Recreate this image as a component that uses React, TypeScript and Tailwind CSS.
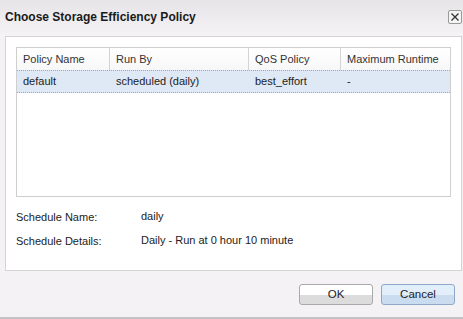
import React from "react";

const font = { fontFamily: '"Liberation Sans", Arial, sans-serif' };

export default function App() {
  const cols = [
    { name: "Policy Name", w: "w-[93px]", v: "default" },
    { name: "Run By", w: "w-[139px]", v: "scheduled (daily)" },
    { name: "QoS Policy", w: "w-[92px]", v: "best_effort" },
    { name: "Maximum Runtime", w: "flex-1", v: "-" },
  ];
  return (
    <div
      style={font}
      className="w-[463px] h-[319px] bg-[#f5f2f5] flex flex-col border-b-[2px] border-[#c4c2c4] overflow-hidden text-[11px] text-[#222]"
    >
      <div className="h-[36px] shrink-0 flex items-center justify-between pl-[5px] pr-[1px] bg-gradient-to-b from-[#e6e4e6] to-[#f6f3f6]">
        <span className="text-[12px] font-bold text-[#1a1a1a] mt-[-2px]">Choose Storage Efficiency Policy</span>
        <div className="w-[14px] h-[14px] border border-[#9a9a9a] rounded-[2px] bg-[#f4f4f4] flex items-center justify-center mt-[-2px]">
          <svg width="8" height="8" viewBox="0 0 8 8">
            <path d="M0.5 0.5 L7.5 7.5 M7.5 0.5 L0.5 7.5" stroke="#333" strokeWidth="1.3" />
          </svg>
        </div>
      </div>
      <div className="ml-[5px] mr-[1px] h-[235px] shrink-0 bg-white border border-[#d6d3d6] pt-[10px] pl-[10px] pr-[10px] flex flex-col">
        <div className="w-[435px] h-[150px] border border-[#cfcfcf] flex flex-col">
          <div className="h-[22px] flex bg-gradient-to-b from-white to-[#f7f7f7]">
            {cols.map((c, i) => (
              <div
                key={c.name}
                className={`${c.w} h-full flex items-center pl-[6px] text-[#333] ${i < 3 ? "border-r border-[#d4d4d4]" : ""}`}
              >
                {c.name}
              </div>
            ))}
          </div>
          <div className="h-[23px] flex bg-[#dfe8f5] border-y border-dotted border-[#98a8c4]">
            {cols.map((c) => (
              <div key={c.name} className={`${c.w} h-full flex items-center pl-[6px] text-[#222]`}>
                {c.v}
              </div>
            ))}
          </div>
        </div>
        <div className="mt-[12px] flex flex-col gap-[8px] text-[#222]">
          <div className="flex h-[16px] items-center">
            <span className="w-[125px]">Schedule Name:</span>
            <span className="mt-[-2px]">daily</span>
          </div>
          <div className="flex h-[16px] items-center">
            <span className="w-[125px]">Schedule Details:</span>
            <span className="mt-[-2px]">Daily - Run at 0 hour 10 minute</span>
          </div>
        </div>
      </div>
      <div className="flex justify-end gap-[8px] pr-[8px] mt-[13px]">
        <button className="w-[74px] h-[21px] rounded-[3px] border border-[#a9a9a9] bg-gradient-to-b from-white from-55% to-[#dcdcdc] to-55% text-[11.5px] text-[#222] flex items-center justify-center">
          OK
        </button>
        <button className="w-[74px] h-[21px] rounded-[3px] border border-[#8ea8c8] bg-gradient-to-b from-[#e2eefa] from-55% to-[#c9dcf0] to-55% text-[11.5px] text-[#222] flex items-center justify-center">
          Cancel
        </button>
      </div>
    </div>
  );
}
